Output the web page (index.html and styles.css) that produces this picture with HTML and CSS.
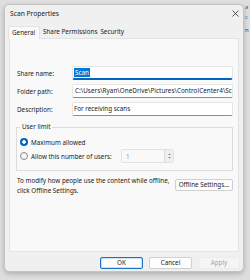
FILE: index.html
```html
<!DOCTYPE html>
<html>
<head>
<meta charset="utf-8">
<link rel="stylesheet" href="styles.css">
</head>
<body>
<div class="desk">
  <div class="behind">
    <span class="b1">a</span>
    <span class="b2">c</span>
    <span class="b3">n</span>
  </div>
  <div class="window">
    <div class="titlebar">
      <span class="title">Scan Properties</span>
      <svg class="close" width="7" height="7" viewBox="0 0 7 7"><path d="M0.5 0.5L6.5 6.5M6.5 0.5L0.5 6.5" stroke="#2b2b2b" stroke-width="0.8" fill="none"/></svg>
    </div>
    <div class="tabs">
      <div class="tab active">General</div>
      <div class="tab">Share Permissions</div>
      <div class="tab">Security</div>
    </div>
    <div class="panel">
      <div class="row"><label>Share name:</label><div class="input focus"><span class="sel">Scan</span></div></div>
      <div class="row"><label>Folder path:</label><div class="input path">C:\Users\Ryan\OneDrive\Pictures\ControlCenter4\Scan</div></div>
      <div class="row"><label>Description:</label><div class="input">For receiving scans</div></div>
      <fieldset class="group">
        <legend>User limit</legend>
        <div class="opt"><span class="radio on"></span><span class="opt-label">Maximum allowed</span></div>
        <div class="opt"><span class="radio"></span><span class="opt-label">Allow this number of users:</span>
          <div class="spin"><span>1</span>
            <span class="spinbtn"><svg width="7" height="12" viewBox="0 0 7 12"><path d="M2 5L3.5 3.5L5 5Z M2 7L3.5 8.5L5 7Z" fill="#8a8a8a"/></svg></span>
          </div>
        </div>
      </fieldset>
      <div class="offline">
        <p>To modify how people use the content while offline, click Offline Settings.</p>
        <button class="btn wide">Offline Settings...</button>
      </div>
    </div>
    <div class="footer">
      <button class="btn default">OK</button>
      <button class="btn">Cancel</button>
      <button class="btn disabled">Apply</button>
    </div>
  </div>
</div>
</body>
</html>
```
FILE: styles.css
```css
body {
  margin: 0;
}
.desk {
  width: 250px;
  height: 280px;
  box-sizing: border-box;
  padding: 4px 6px 0 4px;
  background: #dedede;
  position: relative;
  overflow: hidden;
  font-family: "Noto Sans", "Open Sans", sans-serif;
  font-size: 6.3px;
  color: #1b1b1b;
}
.behind {
  position: absolute;
  left: 245px;
  top: 2px;
  display: flex;
  flex-direction: column;
  font-size: 6px;
  line-height: 10px;
}
.b1 { color: #6a3f8f; }
.b2 { color: #4f6cb5; }
.b3 { color: #333; margin-top: 3px; }
.window {
  position: relative;
  z-index: 1;
  width: 240px;
  height: 268px;
  box-sizing: border-box;
  background: #f0f0f0;
  border: 1px solid #c4c4c4;
  border-radius: 5px;
  box-shadow: 0 2px 5px rgba(0, 0, 0, 0.22);
  display: flex;
  flex-direction: column;
}
.titlebar {
  height: 16px;
  display: flex;
  align-items: center;
  justify-content: space-between;
  padding: 0 4px 0 5px;
  font-size: 6.7px;
}
.close {
  display: block;
}
.tabs {
  display: flex;
  align-items: flex-end;
  height: 17px;
  padding-left: 3px;
}
.tab {
  height: 12px;
  line-height: 12px;
  padding: 0 0 0 3px;
  box-sizing: border-box;
  white-space: nowrap;
}
.tab.active {
  width: 32px;
  background: #f9f9f9;
  border: 1px solid #e3e3e3;
  border-bottom: none;
  border-radius: 2px 2px 0 0;
  height: 13px;
  line-height: 12px;
  position: relative;
  top: 1px;
  z-index: 1;
}
.panel {
  margin: 0 4px;
  height: 214px;
  box-sizing: border-box;
  border: 1px solid #e3e3e3;
  background: #f9f9f9;
  padding: 27px 5px 0 7px;
}
.row {
  display: flex;
  align-items: center;
  height: 14px;
}
.row + .row {
  margin-top: 4px;
}
.row label {
  width: 55px;
  flex: none;
}
.input {
  flex: 1;
  min-width: 0;
  height: 14px;
  box-sizing: border-box;
  background: #fff;
  border: 1px solid #e5e5e5;
  border-bottom-color: #8d8d8d;
  border-radius: 2px;
  padding: 0 0 0 1px;
  line-height: 12px;
  white-space: nowrap;
  overflow: hidden;
}
.input.path {
  padding-left: 2px;
  letter-spacing: 0.05px;
}
.input.focus {
  border-bottom-color: #0067c0;
  box-shadow: inset 0 -1px 0 #0067c0;
}
.sel {
  background: #0078d4;
  color: #fff;
  padding: 0 1px;
}
.group {
  margin: 7px 0 0 -1px;
  width: 217px;
  min-width: 0;
  box-sizing: border-box;
  border: 1px solid #dcdcdc;
  padding: 4px 0 7px 3px;
}
.group legend {
  line-height: 8px;
  padding: 0 2px;
}
.opt {
  display: flex;
  align-items: center;
  height: 14px;
}
.radio {
  width: 8px;
  height: 8px;
  border-radius: 50%;
  box-sizing: border-box;
  border: 1px solid #8a8a8a;
  background: #f5f5f5;
  margin-right: 3px;
  flex: none;
}
.radio.on {
  border: none;
  background: radial-gradient(circle, #fff 1.5px, #0067c0 2px);
}
.opt-label {
  width: 90px;
  flex: none;
  white-space: nowrap;
}
.spin {
  width: 53px;
  height: 14px;
  box-sizing: border-box;
  border: 1px solid #e2e2e2;
  border-radius: 2px;
  background: #f9f9f9;
  display: flex;
  align-items: center;
  justify-content: space-between;
  padding-left: 4px;
  color: #9a9a9a;
}
.spinbtn {
  width: 9px;
  height: 12px;
  box-sizing: border-box;
  border-left: 1px solid #dcdcdc;
  background: #efefef;
  display: flex;
  justify-content: center;
}
.spinbtn svg {
  display: block;
}
.offline {
  display: flex;
  justify-content: space-between;
  align-items: flex-start;
  margin-top: 5px;
}
.offline p {
  margin: 0;
  width: 156px;
  line-height: 10px;
}
.btn {
  width: 43px;
  height: 12px;
  box-sizing: border-box;
  border: 1px solid #d0d0d0;
  border-radius: 2px;
  background: #fdfdfd;
  font: inherit;
  color: #1b1b1b;
  padding: 0;
  line-height: 10px;
  white-space: nowrap;
}
.btn.wide {
  width: 58px;
  margin-top: 3px;
}
.footer {
  display: flex;
  justify-content: flex-end;
  gap: 6px;
  padding: 5px 3px 0 0;
}
.btn.default {
  border-color: #1a73c8;
  box-shadow: inset 0 0 0 0.5px #9cc4ec;
}
.btn.disabled {
  width: 42px;
  background: #f5f5f5;
  border-color: #ececec;
  color: #a5a5a5;
}
```
